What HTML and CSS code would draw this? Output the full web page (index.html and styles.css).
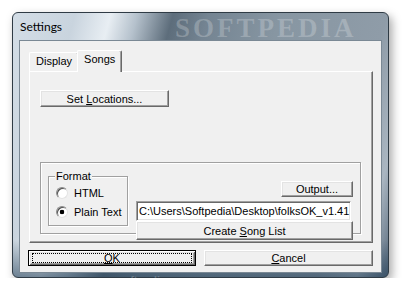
FILE: index.html
```html
<!DOCTYPE html>
<html lang="en">
<head>
    <meta charset="UTF-8">
    <title>Settings</title>
    <link rel="stylesheet" href="styles.css">
</head>
<body>
    <div class="window">
        <div class="titlebar">
            <span class="title">Settings</span>
            <span class="mark">SOFTPEDIA</span>
        </div>

        <div class="client">
            <div class="tabs">
                <div class="tab">Display</div>
                <div class="tab active">Songs</div>
            </div>

            <div class="panel">
                <button class="btn set-loc">Set <u>L</u>ocations...</button>

                <div class="group">
                    <div class="format">
                        <span class="legend">Format</span>
                        <label class="radio"><span class="dot"></span>HTML</label>
                        <label class="radio"><span class="dot checked"></span>Plain Text</label>
                    </div>

                    <div class="output-col">
                        <button class="btn output">Output...</button>
                        <div class="path">C:\Users\Softpedia\Desktop\folksOK_v1.41</div>
                        <button class="btn create">Create <u>S</u>ong List</button>
                    </div>
                </div>
            </div>

            <div class="actions">
                <button class="btn ok"><span class="focus"><u>O</u>K</span></button>
                <button class="btn cancel"><u>C</u>ancel</button>
            </div>
        </div>

        <span class="mark-url">www.softpedia.com</span>
    </div>
</body>
</html>
```

FILE: styles.css
```css
body {
    margin: 0;
    background: #fff;
    font-family: "Liberation Sans", Arial, sans-serif;
    font-size: 11px;
    color: #000;
}
.window {
    position: relative;
    box-sizing: border-box;
    width: 377px;
    height: 266px;
    margin: 12px 0 0 12px;
    padding: 0 6px 5px 6px;
    border: 1px solid #2f3b45;
    border-radius: 6px;
    background:
        linear-gradient(to bottom, transparent 86%, rgba(40, 68, 92, 0.6) 100%),
        linear-gradient(105deg, #d3dde6 0%, #c9d4de 14%, #e8eef3 22%, #b5c1cc 28%, #5d6d7b 36%, #748492 44%, #8796a2 60%, #8f9ca8 84%, #aab6c1 93%, #56687a 100%);
    box-shadow: 3px 4px 10px rgba(0, 0, 0, 0.35);
}
.titlebar {
    height: 27px;
    line-height: 27px;
    padding-left: 1px;
}
.title {
    font-family: Lato, "Noto Sans", sans-serif;
    font-size: 12px;
    color: #000;
}
.mark {
    position: absolute;
    left: 162px;
    top: 1px;
    font-family: "Liberation Serif", serif;
    font-weight: bold;
    font-size: 27px;
    line-height: 28px;
    letter-spacing: 3px;
    color: rgba(255, 255, 255, 0.22);
}
.mark-url {
    position: absolute;
    left: 76px;
    bottom: -9px;
    font-size: 11px;
    font-weight: bold;
    color: rgba(150, 160, 170, 0.45);
}
.client {
    box-sizing: border-box;
    width: 363px;
    height: 233px;
    border: 1px solid #7a8894;
    background: #f0f0f0;
}

/* tab strip */
.tabs {
    display: flex;
    align-items: flex-end;
    height: 21px;
    margin-top: 9px;
    padding-left: 9px;
}
.tab {
    box-sizing: border-box;
    height: 19px;
    padding: 0 6px;
    border: 1px solid;
    border-bottom: none;
    border-color: #fff #696969 #fff #fff;
    border-radius: 2px 2px 0 0;
    box-shadow: inset -1px 0 #a0a0a0;
    background: #f0f0f0;
    line-height: 17px;
}
.tab.active {
    position: relative;
    z-index: 1;
    height: 22px;
    margin: 0 -2px -1px -2px;
    line-height: 17px;
}
.panel {
    box-sizing: border-box;
    width: 344px;
    height: 172px;
    margin-left: 9px;
    padding: 18px 0 0 10px;
    border: 1px solid;
    border-color: #fff #696969 #696969 #fff;
    box-shadow: inset -1px -1px #a0a0a0;
}

/* classic 3d buttons */
.btn {
    display: block;
    box-sizing: border-box;
    padding: 0;
    border: 1px solid;
    border-color: #fff #696969 #696969 #fff;
    box-shadow: inset -1px -1px #a0a0a0, inset 1px 1px #e3e3e3;
    background: #f0f0f0;
    font: inherit;
    color: #000;
    text-align: center;
}
.set-loc {
    width: 129px;
    height: 17px;
}
.group {
    box-sizing: border-box;
    display: flex;
    align-items: flex-start;
    width: 321px;
    height: 72px;
    margin-top: 55px;
    padding: 13px 0 0 7px;
    border: 1px solid #a0a0a0;
    box-shadow: 1px 1px #fff, inset 1px 1px #fff;
}
.format {
    box-sizing: border-box;
    display: flex;
    flex-direction: column;
    width: 80px;
    height: 50px;
    padding-left: 7px;
    border: 1px solid #a0a0a0;
    box-shadow: 1px 1px #fff, inset 1px 1px #fff;
}
.legend {
    align-self: flex-start;
    margin: -7px 0 0 -1px;
    padding: 0 1px;
    line-height: 13px;
    background: #f0f0f0;
}
.radio {
    display: flex;
    align-items: center;
    gap: 6px;
    height: 19px;
}
.dot {
    box-sizing: border-box;
    width: 12px;
    height: 12px;
    border: 1px solid;
    border-color: #8a8a8a #e3e3e3 #e3e3e3 #8a8a8a;
    border-radius: 50%;
    background: #fff;
    box-shadow: inset 1px 1px #505050;
}
.dot.checked {
    background: radial-gradient(circle, #000 0 2px, #fff 2.6px);
}
.output-col {
    display: flex;
    flex-direction: column;
    align-items: flex-end;
    width: 217px;
    margin: 5px 0 0 8px;
}
.output {
    width: 72px;
    height: 16px;
}
.path {
    align-self: flex-start;
    box-sizing: border-box;
    width: 215px;
    height: 20px;
    margin-top: 4px;
    padding-left: 2px;
    border: 1px solid;
    border-color: #a0a0a0 #fff #fff #a0a0a0;
    box-shadow: inset 1px 1px #696969, inset -1px -1px #e3e3e3;
    background: #fff;
    line-height: 18px;
    white-space: nowrap;
    overflow: hidden;
}
.create {
    width: 217px;
    height: 19px;
}

/* dialog buttons */
.actions {
    display: flex;
    gap: 8px;
    margin-top: 7px;
    padding-left: 8px;
}
.ok {
    width: 168px;
    height: 16px;
    padding: 2px 3px;
    border-color: #000;
    box-shadow: inset 1px 1px #fff, inset -1px -1px #696969, inset 2px 2px #e3e3e3, inset -2px -2px #a0a0a0;
}
.focus {
    display: block;
    box-sizing: border-box;
    height: 100%;
    border: 1px dotted #000;
    line-height: 9px;
}
.cancel {
    width: 169px;
    height: 16px;
}
```
